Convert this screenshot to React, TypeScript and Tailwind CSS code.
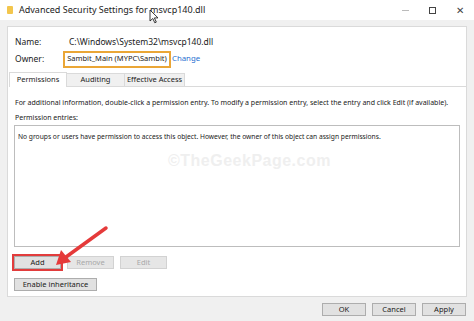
import React from 'react';

const font = { fontFamily: '"Noto Sans", "Open Sans", sans-serif' };

const Btn = ({ label, disabled = false, w }: { label: string; disabled?: boolean; w: string }) => (
  <div
    className={`${w} h-[13px] flex items-center justify-center text-[7.5px] leading-none border whitespace-nowrap ${
      disabled ? 'bg-[#e6e6e6] border-[#d2d2d2] text-[#a8a8a8]' : 'bg-[#e1e1e1] border-[#adadad] text-[#1a1a1a]'
    }`}
  >
    {label}
  </div>
);

const App = () => {
  return (
    <div className="relative w-[474px] h-[321px] overflow-hidden bg-[#f0f0f0] text-[#1a1a1a] flex flex-col" style={font}>
      {/* title bar */}
      <div className="h-[20px] bg-white flex items-center shrink-0">
        <div className="ml-[7px] w-[6px] h-[8px] bg-[#f3c64d] rounded-[1px]" />
        <span className="ml-[6px] text-[9px] text-[#222] whitespace-nowrap">Advanced Security Settings for msvcp140.dll</span>
        <div className="ml-auto flex items-center h-full">
          <div className="w-[26px] flex justify-center">
            <div className="w-[7px] h-px bg-[#bbb]" />
          </div>
          <div className="w-[28px] flex justify-center">
            <div className="w-[7px] h-[7px] border border-[#444]" />
          </div>
          <div className="w-[28px] flex justify-center text-[10px] text-[#444] leading-none">✕</div>
        </div>
      </div>

      {/* body */}
      <div className="px-[7px] pt-[6px] shrink-0">
        <div className="h-[271px] bg-white border border-[#dadada] flex flex-col">
          <div className="h-[16px] mt-[7px] flex items-center text-[8.5px] whitespace-nowrap">
            <span className="ml-[7px] w-[54px]">Name:</span>
            <span>C:\Windows\System32\msvcp140.dll</span>
          </div>
          <div className="h-[18px] flex items-center text-[8.5px] whitespace-nowrap">
            <span className="ml-[7px] w-[48px]">Owner:</span>
            <span className="h-[17px] w-[108px] flex items-center justify-center border-[2px] border-[#eaa636] text-[7.5px]">Sambit_Main (MYPC\Sambit)</span>
            <span className="ml-[1px] text-[#1f6fd1] text-[7.8px]">Change</span>
          </div>

          {/* tabs */}
          <div className="mt-[4px] h-[15px] flex items-end text-[7.5px] whitespace-nowrap">
            <div className="ml-[1px] w-[58px] h-[15px] flex items-center justify-center bg-white border-l border-t border-r border-[#dadada]">Permissions</div>
            <div className="w-[58px] h-[14px] flex items-center justify-center bg-[#f0f0f0] border-t border-r border-b border-[#dadada]">Auditing</div>
            <div className="w-[60px] h-[14px] flex items-center justify-center bg-[#f0f0f0] border-t border-r border-b border-[#dadada]">Effective Access</div>
            <div className="flex-1 border-b border-[#dadada]" />
          </div>

          <div className="flex-1 flex flex-col text-[7px] whitespace-nowrap">
            <div className="h-[16px] mt-[8px] flex items-center ml-[7px]">
              For additional information, double-click a permission entry. To modify a permission entry, select the entry and click Edit (if available).
            </div>
            <div className="h-[14px] flex items-center ml-[7px]">Permission entries:</div>
            <div className="mx-[6px] h-[122px] border border-[#bdbdbd] px-[3px] pt-[6px] text-[6.7px]">
              No groups or users have permission to access this object. However, the owner of this object can assign permissions.
            </div>
            <div className="mt-[9px] ml-[6px] flex gap-[6px]">
              <div className="outline-[2px] outline outline-[#e23c3c]">
                <Btn label="Add" w="w-[47px]" />
              </div>
              <Btn label="Remove" w="w-[47px]" disabled />
              <Btn label="Edit" w="w-[47px]" disabled />
            </div>
            <div className="mt-[9px] ml-[6px]">
              <Btn label="Enable inheritance" w="w-[83px]" />
            </div>
          </div>
        </div>
      </div>

      {/* footer */}
      <div className="flex justify-end gap-[6px] pr-[8px] pt-[6px]">
        <Btn label="OK" w="w-[44px]" />
        <Btn label="Cancel" w="w-[44px]" />
        <Btn label="Apply" w="w-[44px]" />
      </div>

      {/* watermark */}
      <div className="absolute left-[168px] top-[149px] text-[16px] font-bold text-[#efefef] tracking-[0.5px] whitespace-nowrap" style={{ fontFamily: '"Liberation Sans", Arial, sans-serif' }}>
        ©TheGeekPage.com
      </div>

      {/* red arrow */}
      <svg className="absolute left-0 top-0" width="474" height="321" viewBox="0 0 474 321">
        <line x1="106" y1="228" x2="66" y2="257" stroke="#e53a3a" strokeWidth="3.5" strokeLinecap="round" />
        <polygon points="56,265 61,250 71,262" fill="#e53a3a" />
      </svg>

      {/* mouse cursor */}
      <svg className="absolute left-[149px] top-[9px]" width="10" height="15" viewBox="0 0 10 15">
        <path d="M1 1 L1 12 L3.8 9.5 L5.8 13.8 L7.3 13.1 L5.4 8.9 L9 8.9 Z" fill="white" stroke="#222" strokeWidth="0.9" strokeLinejoin="round" />
      </svg>
    </div>
  );
};

export default App;
